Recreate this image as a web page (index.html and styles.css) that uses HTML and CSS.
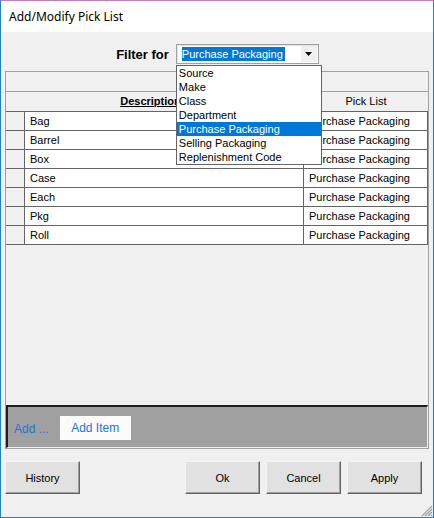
FILE: index.html
```html
<!DOCTYPE html>
<html>
<head>
<meta charset="utf-8">
<link rel="stylesheet" href="styles.css">
</head>
<body>
<div class="window">
  <div class="titlebar">Add/Modify Pick List</div>
  <div class="client">
    <div class="filter-row">
      <span class="filter-label">Filter for</span>
      <div class="combo">
        <span class="combo-sel">Purchase Packaging</span>
        <span class="combo-btn"><svg width="7" height="4" viewBox="0 0 7 4"><path d="M0 0H7L3.5 4Z" fill="#000"/></svg></span>
        <ul class="droplist">
          <li>Source</li>
          <li>Make</li>
          <li>Class</li>
          <li>Department</li>
          <li class="hl">Purchase Packaging</li>
          <li>Selling Packaging</li>
          <li>Replenishment Code</li>
        </ul>
      </div>
    </div>
    <div class="grid">
      <div class="band"></div>
      <div class="head">
        <div class="h-desc">Description</div>
        <div class="h-pick">Pick List</div>
      </div>
      <div class="row"><div class="rh"></div><div class="c-desc">Bag</div><div class="c-pick">Purchase Packaging</div></div>
      <div class="row"><div class="rh"></div><div class="c-desc">Barrel</div><div class="c-pick">Purchase Packaging</div></div>
      <div class="row"><div class="rh"></div><div class="c-desc">Box</div><div class="c-pick">Purchase Packaging</div></div>
      <div class="row"><div class="rh"></div><div class="c-desc">Case</div><div class="c-pick">Purchase Packaging</div></div>
      <div class="row"><div class="rh"></div><div class="c-desc">Each</div><div class="c-pick">Purchase Packaging</div></div>
      <div class="row"><div class="rh"></div><div class="c-desc">Pkg</div><div class="c-pick">Purchase Packaging</div></div>
      <div class="row"><div class="rh"></div><div class="c-desc">Roll</div><div class="c-pick">Purchase Packaging</div></div>
      <div class="grid-empty"></div>
      <div class="add-panel">
        <span class="add-link">Add ...</span>
        <span class="add-btn">Add Item</span>
      </div>
    </div>
    <div class="buttons">
      <button class="btn">History</button>
      <div class="btn-group">
        <button class="btn">Ok</button>
        <button class="btn">Cancel</button>
        <button class="btn">Apply</button>
      </div>
    </div>
    <svg class="grip" width="12" height="12" viewBox="0 0 12 12">
      <path d="M11 1L1 11M11 4L4 11M11 7L7 11M11 10L10 11" stroke="#a0a0a0" stroke-width="1.2" fill="none"/>
    </svg>
  </div>
</div>
</body>
</html>
```

FILE: styles.css
```css
* { box-sizing: border-box; }
html, body { margin: 0; padding: 0; }
body {
  width: 434px;
  height: 518px;
  font-family: "Liberation Sans", Arial, sans-serif;
  font-size: 11px;
  color: #000;
  background: #fff;
}
.window {
  width: 434px;
  height: 518px;
  display: flex;
  flex-direction: column;
  border-left: 1px solid #1883d7;
  border-right: 1px solid #1883d7;
  border-bottom: 1px solid #1883d7;
  border-top: 1px solid #c77ac6;
}
.titlebar {
  height: 31px;
  background: #fff;
  padding-left: 8px;
  display: flex;
  align-items: center;
  font-family: "Noto Sans", "Open Sans", sans-serif;
  font-size: 12px;
  color: #000;
}
.client {
  flex: 1;
  background: #f0f0f0;
  display: flex;
  flex-direction: column;
  padding: 12px 4px 0 4px;
  position: relative;
}
.filter-row {
  display: flex;
  justify-content: center;
  align-items: center;
  gap: 7px;
  height: 20px;
  padding-left: 1px;
}
.filter-label {
  font-weight: bold;
  font-size: 13px;
}
.combo {
  position: relative;
  width: 143px;
  height: 20px;
  background: #fff;
  border: 1px solid #a0a0a0;
  box-shadow: inset 1px 1px 0 #e3e3e3;
  display: flex;
  align-items: center;
  padding-left: 5px;
}
.combo-sel {
  background: #0078d7;
  color: #fff;
  height: 14px;
  line-height: 14px;
  padding: 0 2px 0 0;
  white-space: nowrap;
  font-size: 11px;
}
.combo-btn {
  position: absolute;
  right: 1px;
  top: 1px;
  width: 16px;
  height: 16px;
  background: #f0f0f0;
  display: flex;
  align-items: center;
  justify-content: center;
}
.droplist {
  position: absolute;
  left: -1px;
  top: 20px;
  width: 146px;
  margin: 0;
  padding: 0;
  list-style: none;
  background: #fff;
  border: 1px solid #646464;
  z-index: 5;
}
.droplist li {
  height: 14px;
  line-height: 14px;
  padding-left: 2px;
  white-space: nowrap;
}
.droplist li.hl {
  background: #0078d7;
  color: #fff;
}
.grid {
  margin-top: 7px;
  height: 378px;
  border: 1px solid #a0a0a0;
  display: flex;
  flex-direction: column;
  background: #f0f0f0;
}
.band {
  height: 20px;
  border-bottom: 1px solid #a0a0a0;
  flex-shrink: 0;
}
.head {
  height: 20px;
  display: flex;
  border-bottom: 1px solid #646464;
  flex-shrink: 0;
}
.h-desc {
  width: 298px;
  border-right: 1px solid #a0a0a0;
  text-align: center;
  font-weight: bold;
  text-decoration: underline;
  line-height: 19px;
  padding-right: 8px;
}
.h-pick {
  flex: 1;
  text-align: center;
  line-height: 19px;
}
.row {
  height: 19px;
  display: flex;
  border-bottom: 1px solid #646464;
  flex-shrink: 0;
}
.rh {
  width: 19px;
  border-right: 1px solid #646464;
  background: #f0f0f0;
}
.c-desc {
  width: 279px;
  background: #fff;
  border-right: 1px solid #646464;
  padding-left: 5px;
  line-height: 18px;
  white-space: nowrap;
}
.c-pick {
  flex: 1;
  background: #fff;
  border-right: 1px solid #646464;
  padding-left: 5px;
  line-height: 18px;
  white-space: nowrap;
}
.grid-empty {
  flex: 1;
}
.add-panel {
  height: 43px;
  flex-shrink: 0;
  background: #a0a0a0;
  border-top: 2px solid #1e1e1e;
  border-left: 2px solid #1e1e1e;
  border-right: 1px solid #f0f0f0;
  border-bottom: 1px solid #f0f0f0;
  display: flex;
  align-items: center;
  padding-left: 6px;
  gap: 11px;
  font-size: 12px;
  color: #1a78d4;
}
.add-link {
  padding-top: 3px;
}
.add-btn {
  width: 71px;
  height: 24px;
  background: #fbfbfb;
  display: flex;
  align-items: center;
  justify-content: center;
  margin-top: 1px;
}
.buttons {
  margin-top: 12px;
  display: flex;
  justify-content: space-between;
  padding-right: 7px;
}
.btn-group {
  display: flex;
  gap: 6px;
}
.btn {
  width: 75px;
  height: 33px;
  margin: 0;
  padding: 0;
  font-family: "Liberation Sans", Arial, sans-serif;
  font-size: 11px;
  color: #000;
  background: #e1e1e1;
  border-top: 1px solid #f4f4f4;
  border-left: 1px solid #f4f4f4;
  border-right: 1px solid #646464;
  border-bottom: 1px solid #646464;
  box-shadow: inset -1px -1px 0 #a0a0a0;
}
.grip {
  position: absolute;
  right: 0;
  bottom: 0;
}
```
